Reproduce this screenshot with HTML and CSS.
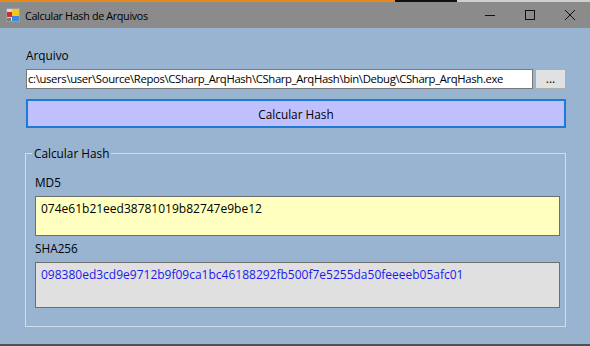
FILE: index.html
```html
<!DOCTYPE html>
<html lang="pt">
<head>
    <meta charset="UTF-8">
    <meta name="viewport" content="width=device-width, initial-scale=1.0">
    <title>Calcular Hash de Arquivos</title>
    <link rel="stylesheet" href="styles.css">
</head>
<body>

    <div class="window">
        <div class="edge-top"></div>

        <div class="titlebar">
            <svg class="app-icon" width="14" height="14" viewBox="0 0 14 14">
                <rect x="0.5" y="0.5" width="13" height="13" fill="#d8d8d8" stroke="#9a9a9a"/>
                <rect x="1" y="4" width="5" height="5" fill="#d92a2a"/>
                <rect x="6" y="1" width="7" height="7" fill="#f2c81e"/>
                <rect x="6" y="8" width="7" height="5" fill="#3a8be0"/>
                <rect x="1" y="10" width="4" height="3" fill="#7b7b7b"/>
            </svg>
            <span class="title">Calcular Hash de Arquivos</span>
            <div class="controls">
                <span class="ctl">
                    <svg width="10" height="10" viewBox="0 0 10 10"><path d="M0 5.5H10" stroke="#111" stroke-width="1"/></svg>
                </span>
                <span class="ctl">
                    <svg width="10" height="10" viewBox="0 0 10 10"><rect x="0.5" y="0.5" width="9" height="9" fill="none" stroke="#111" stroke-width="1"/></svg>
                </span>
                <span class="ctl">
                    <svg width="10" height="10" viewBox="0 0 10 10"><path d="M0 0L10 10M10 0L0 10" stroke="#111" stroke-width="1"/></svg>
                </span>
            </div>
        </div>

        <div class="content">
            <div class="label-file">Arquivo</div>
            <div class="file-row">
                <div class="file-box">c:\users\user\Source\Repos\CSharp_ArqHash\CSharp_ArqHash\bin\Debug\CSharp_ArqHash.exe</div>
                <button class="browse">...</button>
            </div>

            <button class="btn-hash">Calcular Hash</button>

            <fieldset class="group">
                <legend>Calcular Hash</legend>

                <div class="field-label">MD5</div>
                <div class="hash-box md5">074e61b21eed38781019b82747e9be12</div>

                <div class="field-label sha-label">SHA256</div>
                <div class="hash-box sha">098380ed3cd9e9712b9f09ca1bc46188292fb500f7e5255da50feeeeb05afc01</div>
            </fieldset>
        </div>

        <div class="edge-bottom"></div>
    </div>

</body>
</html>
```

FILE: styles.css
```css
body {
    margin: 0;
    font-family: "Open Sans", "Noto Sans", sans-serif;
    font-size: 12px;
    color: #000;
    background-color: #99b4d1;
}
.window {
    display: flex;
    flex-direction: column;
    width: 590px;
    height: 346px;
    overflow: hidden;
}
.edge-top {
    height: 2px;
    background: linear-gradient(to right, #e5891c 0, #e5891c 395px, #111 395px, #111 457px, #cfcfcf 457px);
}
.titlebar {
    display: flex;
    align-items: center;
    height: 26px;
    background-color: #8b8b8b;
}
.app-icon {
    margin-left: 6px;
    margin-right: 5px;
}
.title {
    font-size: 10.8px;
    letter-spacing: -0.35px;
    color: #000;
}
.controls {
    display: flex;
    margin-left: auto;
    height: 100%;
}
.ctl {
    display: flex;
    align-items: center;
    justify-content: center;
    width: 40px;
    height: 100%;
}
.content {
    flex-grow: 1;
    padding: 19px 24px 0 26px;
}
.label-file {
    height: 16px;
    line-height: 16px;
    font-size: 11.8px;
}
.file-row {
    display: flex;
    gap: 2px;
    margin-top: 6px;
    height: 20px;
}
.file-box {
    flex-grow: 1;
    background-color: #fff;
    border: 1px solid #7a7a7a;
    padding: 0 1px;
    line-height: 18px;
    font-size: 11.3px;
    letter-spacing: -0.35px;
    white-space: nowrap;
    overflow: hidden;
}
.browse {
    width: 31px;
    padding: 0;
    border: 1px solid #adadad;
    background-color: #e1e1e1;
    font-family: inherit;
    font-size: 12px;
    line-height: 18px;
}
.btn-hash {
    display: block;
    width: 100%;
    height: 29px;
    margin-top: 10px;
    padding: 0;
    border: 2px solid #1f7ad6;
    background-color: #c0c0ff;
    font-family: inherit;
    font-size: 11.8px;
}
.group {
    margin: 17px 0 0 -1px;
    padding: 13px 5px 18px 9px;
    height: 182px;
    box-sizing: border-box;
    border: 1px solid #d2dbe6;
}
.group legend {
    padding: 0 2px;
    margin-left: -3px;
    font-size: 11.8px;
}
.field-label {
    height: 16px;
    line-height: 16px;
    font-size: 11.8px;
}
.sha-label {
    margin-top: 4px;
}
.hash-box {
    width: 525px;
    box-sizing: border-box;
    margin-top: 6px;
    padding: 3px 5px;
    border: 1px solid #6e6e6e;
    font-size: 12px;
}
.md5 {
    height: 40px;
    background-color: #ffffc0;
}
.sha {
    height: 46px;
    background-color: #e0e0e0;
    color: #1a1aee;
}
.edge-bottom {
    height: 2px;
    background-color: #4f5257;
}
```
